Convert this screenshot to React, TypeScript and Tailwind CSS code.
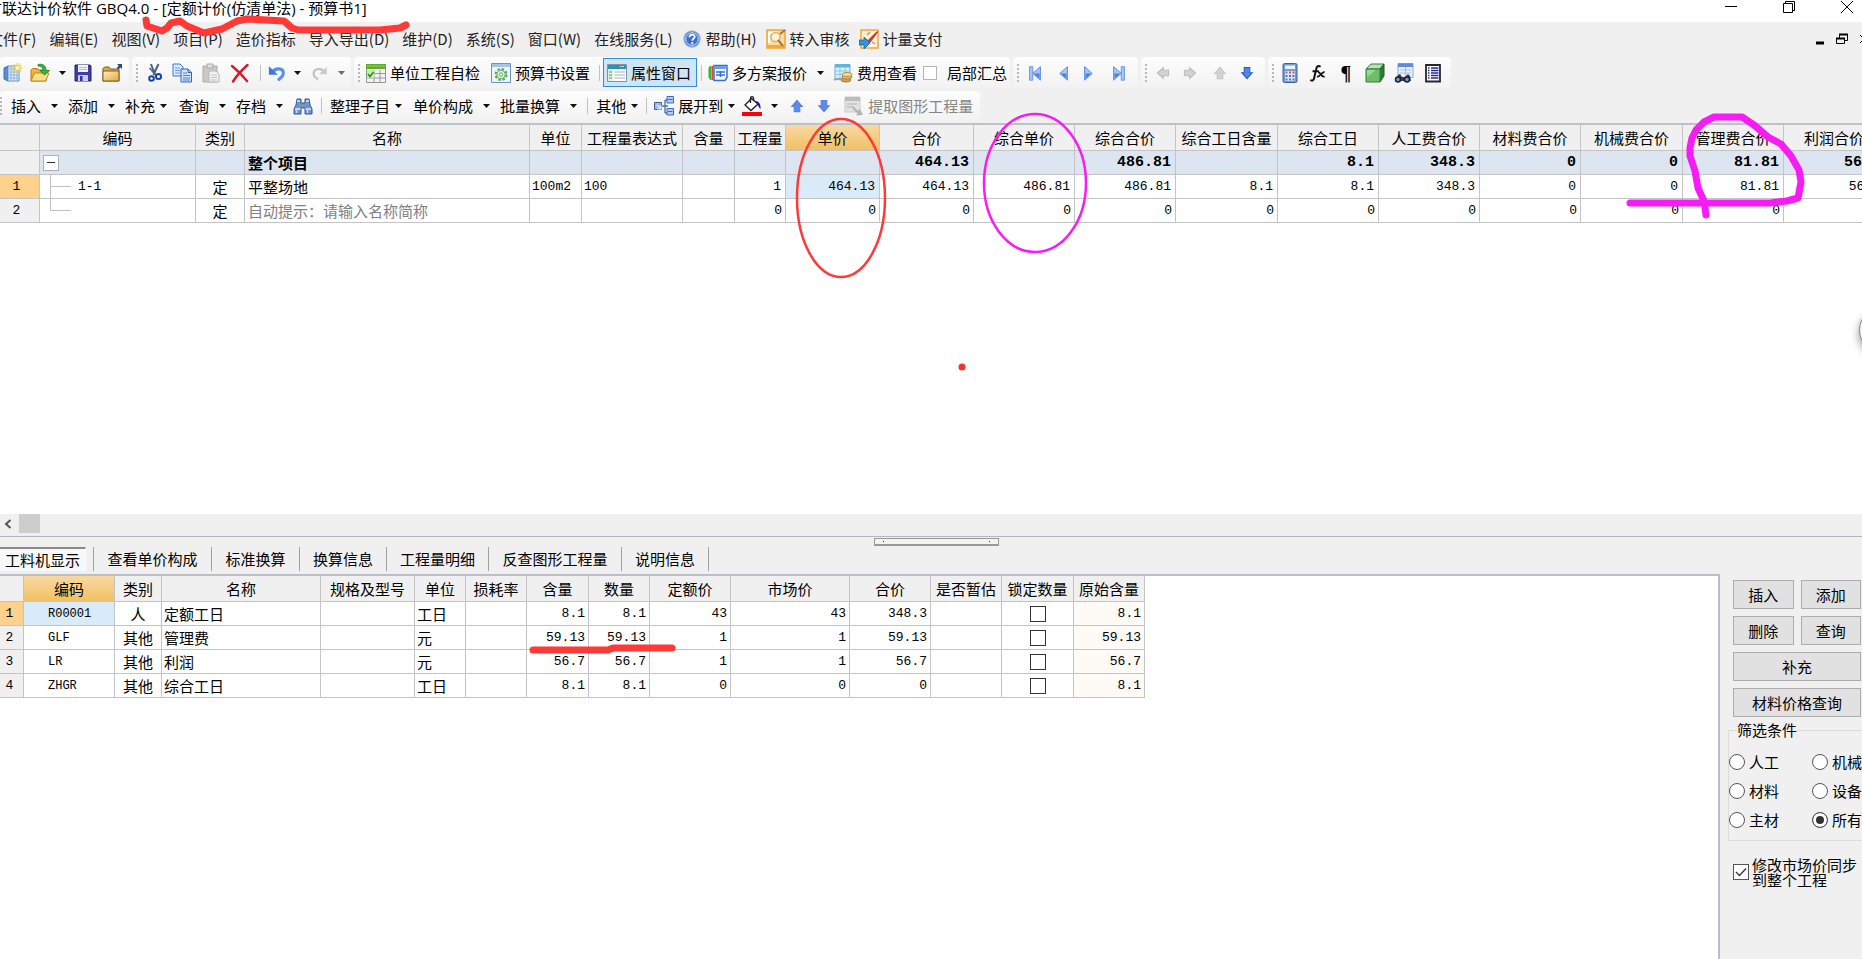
import { useState } from 'react';
import type { ReactNode } from 'react';

const menus = ['文件(F)', '编辑(E)', '视图(V)', '项目(P)', '造价指标', '导入导出(D)', '维护(D)', '系统(S)', '窗口(W)', '在线服务(L)'];

const upperCols = [
  { title: '编码', w: 156 },
  { title: '类别', w: 49 },
  { title: '名称', w: 285 },
  { title: '单位', w: 52 },
  { title: '工程量表达式', w: 101 },
  { title: '含量', w: 52 },
  { title: '工程量', w: 51 },
  { title: '单价', w: 94 },
  { title: '合价', w: 94 },
  { title: '综合单价', w: 101 },
  { title: '综合合价', w: 101 },
  { title: '综合工日含量', w: 102 },
  { title: '综合工日', w: 101 },
  { title: '人工费合价', w: 101 },
  { title: '材料费合价', w: 101 },
  { title: '机械费合价', w: 102 },
  { title: '管理费合价', w: 101 },
  { title: '利润合价', w: 101 },
];

const totals = ['', '', '464.13', '', '486.81', '', '8.1', '348.3', '0', '0', '81.81', '56.7'];
const rowOne = ['1', '464.13', '464.13', '486.81', '486.81', '8.1', '8.1', '348.3', '0', '0', '81.81', '56.7'];
const rowTwo = ['0', '0', '0', '0', '0', '0', '0', '0', '0', '0', '0', ''];

const lowerCols = [
  { title: '编码', w: 91 },
  { title: '类别', w: 47 },
  { title: '名称', w: 159 },
  { title: '规格及型号', w: 94 },
  { title: '单位', w: 51 },
  { title: '损耗率', w: 61 },
  { title: '含量', w: 62 },
  { title: '数量', w: 61 },
  { title: '定额价', w: 81 },
  { title: '市场价', w: 119 },
  { title: '合价', w: 81 },
  { title: '是否暂估', w: 71 },
  { title: '锁定数量', w: 72 },
  { title: '原始含量', w: 71 },
];

const lowerRows = [
  { code: 'R00001', kind: '人', name: '定额工日', unit: '工日', amount: '8.1', price: '43', total: '348.3' },
  { code: 'GLF', kind: '其他', name: '管理费', unit: '元', amount: '59.13', price: '1', total: '59.13' },
  { code: 'LR', kind: '其他', name: '利润', unit: '元', amount: '56.7', price: '1', total: '56.7' },
  { code: 'ZHGR', kind: '其他', name: '综合工日', unit: '工日', amount: '8.1', price: '0', total: '0' },
];

const tabs = [
  { title: '查看单价构成', cls: 'w-[118px]' },
  { title: '标准换算', cls: 'w-[88px]' },
  { title: '换算信息', cls: 'w-[87px]' },
  { title: '工程量明细', cls: 'w-[102px]' },
  { title: '反查图形工程量', cls: 'w-[133px]' },
  { title: '说明信息', cls: 'w-[87px]' },
];

const filters = ['人工', '机械', '材料', '设备', '主材', '所有'];

const cell = 'border-r border-b border-[#c4c4c4] p-0 whitespace-nowrap overflow-hidden';
const num = "font-['Liberation_Mono',monospace] text-[13px]";
const headCell = `${cell} bg-[#f0f0f0] text-center font-normal`;
const activeHead = `${cell} bg-linear-to-b from-[#f8d9a2] to-[#f0c062] text-center font-normal`;

function Svg({ size = 20, children }: { size?: number; children: ReactNode }) {
  return (
    <svg width={size} height={size} viewBox="0 0 20 20" fill="none" className="shrink-0" aria-hidden="true">
      {children}
    </svg>
  );
}

/* ---------- icons ---------- */

const NewIcon = () => (
  <Svg>
    <path d="M2 5l4-2v15l-4-2z" fill="#5d8fd0" stroke="#3b6db0" />
    <path d="M6 3h11v15H6z" fill="#e3eefb" stroke="#5f8dc8" />
    <path d="M7 6h9M7 9h9M7 12h9M7 15h9M9 4v13M12 4v13M15 4v13" stroke="#86aede" strokeWidth=".9" />
    <path d="M15.500 0v10M10.500 5h10M12 1.500l7 7M19 1.500l-7 7" stroke="#f6cf3c" strokeWidth="1.500" />
    <circle cx="15.500" cy="5" r="2" fill="#fff6b0" />
  </Svg>
);

const OpenIcon = () => (
  <Svg>
    <path d="M1 18V7l1.500-1.500h5L9 7h7v11z" fill="#f0b63a" stroke="#b07d16" />
    <path d="M1 18l3.500-8H19l-3.500 8z" fill="#ffdf83" stroke="#b98a22" />
    <path d="M8 1.500c5-1 8 1 8 6h3.500L14.500 12 10 7.500h3c0-3-1.500-4.500-5-4.500z" fill="#3fb241" stroke="#1b7c22" strokeWidth=".8" />
  </Svg>
);

const SaveIcon = () => (
  <Svg>
    <path d="M2 2h15l1 1v15H2z" fill="#3c3fa8" stroke="#23266f" />
    <path d="M5 2h10v7H5z" fill="#f4f5fb" />
    <path d="M6 4.500h8M6 6.500h8" stroke="#b3b7d8" />
    <path d="M5 12h10v6H5z" fill="#c9cdea" />
    <path d="M7 13h2.500v5H7z" fill="#30339a" />
  </Svg>
);

const FolderIcon = () => (
  <Svg>
    <path d="M1 18V5.500L2.500 4H7l1.500 2H17v12z" fill="#d9a948" stroke="#7d5f22" />
    <path d="M1 18V8h16v10z" fill="url(#folderFill)" stroke="#7d5f22" />
    <path d="M20 6V1h-5l1.800 1.800-2 2 1.600 1.600 2-2z" fill="#2f4a78" />
    <defs>
      <linearGradient id="folderFill" x1="0" y1="0" x2="1" y2="1">
        <stop stopColor="#fff0bf" />
        <stop offset="1" stopColor="#e2a836" />
      </linearGradient>
    </defs>
  </Svg>
);

const CutIcon = () => (
  <Svg>
    <path d="M6 1l4 11M13.500 1L10 8.500 8.500 12" stroke="#4c6285" strokeWidth="2" />
    <path d="M4.500 5l7 8" stroke="#4c6285" strokeWidth="1.500" />
    <circle cx="6.500" cy="15.500" r="2.300" stroke="#1646a4" strokeWidth="2" />
    <circle cx="13.500" cy="13.500" r="2.600" stroke="#1646a4" strokeWidth="2" />
  </Svg>
);

const CopyIcon = () => (
  <Svg>
    <path d="M1 1h7l3 3v9H1z" fill="#dcebfc" stroke="#3c74c4" />
    <path d="M3 5h5M3 7.500h5M3 10h5" stroke="#6c9cdc" />
    <path d="M9 6h7l3.500 3.500V19H9z" fill="#cfe3fb" stroke="#2f65b8" />
    <path d="M11 10h4M11 12.500h7M11 15h7M11 17h7" stroke="#4c84d0" />
    <path d="M16 6v3.500h3.500" stroke="#2f65b8" />
  </Svg>
);

const PasteIcon = () => (
  <Svg>
    <path d="M2 3h14v16H2z" fill="#c9c9c9" stroke="#adadad" />
    <path d="M6 1h6v4H6z" fill="#e2e2e2" stroke="#a8a8a8" />
    <path d="M8 8h7l3 3v8H8z" fill="#f1f1f1" stroke="#b5b5b5" />
    <path d="M10 12h6M10 14.500h6M10 17h6" stroke="#c4c4c4" />
  </Svg>
);

const DeleteIcon = () => (
  <Svg>
    <path d="M2 3c5 4 10 9 15 15M17.500 2C12 7 7 12 3 18.500" stroke="#d8182c" strokeWidth="2.400" strokeLinecap="round" />
  </Svg>
);

const UndoIcon = () => (
  <Svg size={18}>
    <path d="M5 9c3-5 12-5 12 1 0 4-3 6-6 8" stroke="#5b90e4" strokeWidth="3.500" />
    <path d="M1 2.500V12h10z" fill="#3f78d8" />
  </Svg>
);

const RedoIcon = () => (
  <Svg size={18}>
    <path d="M14 8C11 4 3 5 3 10.500c0 3.500 3 5.500 5 6.500" stroke="#c4c4c4" strokeWidth="2.600" />
    <path d="M17.500 3v8.500H9z" fill="#c9c9c9" />
  </Svg>
);

const CheckTableIcon = () => (
  <Svg>
    <path d="M.5 1.500h19v18H.5z" fill="#f3f3f3" stroke="#8d9a8d" />
    <path d="M0 1h20v5H0z" fill="#5cae2c" />
    <path d="M1 3h18" stroke="#94d35f" />
    <path d="M1 10.500h18M1 15h18M8 7v12M14 7v12" stroke="#9a9a9a" />
    <path d="M1 7h7v8H1z" fill="#c9ecb0" />
    <path d="M2 11l2 2.500L7.500 9" stroke="#2f9a1c" strokeWidth="1.800" />
  </Svg>
);

const SettingIcon = () => (
  <Svg>
    <path d="M.5.5h19v19H.5z" fill="#edf4fb" stroke="#6f93bd" />
    <path d="M1 1h18v3H1z" fill="#a6c4e6" />
    <circle cx="10" cy="11.500" r="5.500" stroke="#58a858" strokeWidth="2" strokeDasharray="2.600 1.700" />
    <circle cx="10" cy="11.500" r="4.200" fill="#dff2dc" stroke="#58a858" />
    <circle cx="10" cy="11.500" r="1.700" fill="#fff" stroke="#58a858" />
  </Svg>
);

const PropertyIcon = () => (
  <Svg>
    <path d="M.5 1.500h19v17H.5z" fill="#fbfdfe" stroke="#7e95a8" />
    <path d="M1 2h18v4H1z" fill="#2b92bb" />
    <path d="M13 3.500h1.500M15.500 3.500H17" stroke="#fff" />
    <path d="M1 6h5v12H1z" fill="#dff0dc" />
    <path d="M2 9h3M2 12h3M2 15h3" stroke="#56a356" strokeWidth="1.200" />
    <path d="M7.500 9H18M7.500 12H18M7.500 15H18" stroke="#aab4bd" strokeWidth="1.200" />
  </Svg>
);

const PlansIcon = () => (
  <Svg>
    <path d="M3 3L1 4.500v10L3 17z" fill="#3cc23c" stroke="#2fae2f" />
    <path d="M4.500 3v14" stroke="#e8462a" strokeWidth="1.500" />
    <path d="M6 2.500h13v12l-2 3H6z" fill="#f2f7fe" stroke="#3a6fd0" strokeWidth="1.500" />
    <path d="M6 3h13v3H6z" fill="#6c9cee" />
    <path d="M8 9h9M8 12h9M12.500 8v6" stroke="#3a6fd0" strokeWidth="1.500" />
  </Svg>
);

const CostIcon = () => (
  <Svg>
    <path d="M2 1.500h15v14H2z" fill="#d9f0fb" stroke="#67b0d8" />
    <path d="M2 1.500h15v3H2z" fill="#5fb4e0" />
    <path d="M2 8h15M2 11.500h15M7 4v11M12 4v11" stroke="#8cc8e6" />
    <path d="M1 17c3-2 6 0 10-1" stroke="#a2a2a2" strokeWidth="2" />
    <ellipse cx="13" cy="17" rx="5" ry="2" fill="#d0a350" stroke="#a87c34" />
    <ellipse cx="14" cy="14" rx="5" ry="2" fill="#e6c078" stroke="#a87c34" />
    <ellipse cx="14" cy="11.500" rx="5" ry="2" fill="#f6dc98" stroke="#b88c40" />
  </Svg>
);

const NavIcon = ({ flip, bar }: { flip?: boolean; bar?: boolean }) => (
  <Svg size={18}>
    <g transform={flip ? 'matrix(-1 0 0 1 20 0)' : undefined}>
      {bar && <path d="M4 3h3.500v15H4z" fill="#a5c6f8" stroke="#5f90e4" />}
      <path d="M16 3v15l-8.500-7.500z" fill="#a5c6f8" stroke="#4f84e0" />
      <path d="M15 10.500V16l-6.500-5.500z" fill="#4a80e4" />
    </g>
  </Svg>
);

const ArrowIcon = ({ turn, fill, edge, size = 14 }: { turn: number; fill: string; edge: string; size?: number }) => (
  <Svg size={size}>
    <path d="M10 2l7.500 8.500H14V18H6v-7.500H2.500z" fill={fill} stroke={edge} strokeWidth="1.500" transform={`rotate(${turn} 10 10)`} />
  </Svg>
);

const CalcIcon = () => (
  <Svg>
    <rect x="3" y=".5" width="14" height="19" rx="1.500" fill="#6f9bd6" stroke="#3c62a0" />
    <path d="M5 2.500h10v3.500H5z" fill="#e9f3fd" />
    <path d="M5 8h10v10H5z" fill="#dce8f6" />
    <path d="M5.500 9.500h2M9 9.500h2M12.500 9.500h2" stroke="#e05050" strokeWidth="2" />
    <path d="M5.500 13h2M9 13h2M12.500 13h2M5.500 16.500h2M9 16.500h2M12.500 16.500h2" stroke="#4a78c0" strokeWidth="2" />
  </Svg>
);

const FxIcon = () => (
  <Svg size={18}>
    <path d="M14 3c-3-2-4.500 0-5 3L7 15c-.5 3-2 4-4.500 3M5 8h7" stroke="#111" strokeWidth="2.200" />
    <path d="M11 9c3-1 3 6 7.500 5M18.500 9c-3-1-5 6-8.500 5" stroke="#111" strokeWidth="1.900" />
  </Svg>
);

const CubeIcon = () => (
  <Svg>
    <path d="M1 6l5-5h13l-4 5z" fill="#b6e6b0" stroke="#3b7c3b" />
    <path d="M15 6l4-5v12l-4 6z" fill="#2f7a35" stroke="#235e28" />
    <path d="M1 6h14v13H1z" fill="#6cbf68" stroke="#3b7c3b" />
    <path d="M2 7h9L2 14z" fill="#98d892" />
  </Svg>
);

const FindSheetIcon = () => (
  <Svg>
    <path d="M4 .5h15v14H4z" fill="#e8f0fb" stroke="#8fa9d0" />
    <path d="M4 .5h15v3.500H4z" fill="#5c8be0" />
    <path d="M6 7h11M6 10h11M11.500 4v9" stroke="#aabfe0" />
    <path d="M4 12l2-1 2 3h3l3-3 2 2 1 5H1z" fill="#343b48" />
    <circle cx="4" cy="16.500" r="2.500" fill="#6f9fd0" stroke="#1c2430" strokeWidth="1.500" />
    <circle cx="13" cy="16.500" r="2.500" fill="#6f9fd0" stroke="#1c2430" strokeWidth="1.500" />
  </Svg>
);

const ListIcon = () => (
  <Svg>
    <path d="M3 2h14v16.500H3z" fill="#fff" stroke="#26262c" strokeWidth="1.800" />
    <path d="M8 5h7.500M8 7.500h7.500M8 10h7.500M8 12.500h7.500M8 15h7.500M5 5h1.500M5 7.500h1.500M5 10h1.500M5 12.500h1.500M5 15h1.500" stroke="#2a2a90" strokeWidth="1.300" />
  </Svg>
);

const BinocularsIcon = () => (
  <Svg>
    <path d="M4 3h4v4h4V3h4l1 6 2 4v5h-7v-6H8v6H1v-5l2-4z" fill="#6f95cc" stroke="#34588f" />
    <path d="M2 13h5.500M12.500 13H18M4 5h3M13 5h3" stroke="#dfeaf8" strokeWidth="1.500" />
    <path d="M3.500 14v3M14.500 14v3" stroke="#c3d8f2" strokeWidth="1.500" />
  </Svg>
);

const TreeIcon = () => (
  <Svg>
    <path d="M8 10h3M11 4v13M11 4h3M11 17h3M11 10h3" stroke="#4a6fa8" strokeWidth="1.300" />
    <path d="M.5 6.500h7v7h-7z" fill="#9db9e4" stroke="#3d5f9c" />
    <path d="M3 9l4 4M7 9v4H3" stroke="#e8f0fb" strokeWidth="1.200" />
    <path d="M13 .5h6.500V7H13zM13 12.500h6.500V19H13z" fill="#b5cbee" stroke="#3d6cc4" />
    <path d="M14 3.500h4.500M14 15.500h4.500" stroke="#3d6cc4" />
  </Svg>
);

const BucketIcon = () => (
  <Svg>
    <path d="M0 16h20v4H0z" fill="#fb0007" />
    <path d="M3 9l6.500-6.500L16 8l-7 6.500z" fill="#fff" stroke="#1e1e28" strokeWidth="1.300" />
    <path d="M8.500 7V2c0-1.800 3-1.800 3 0v3" stroke="#1e1e28" strokeWidth="1.300" />
    <path d="M13 5c4 0 6 3 5.500 8-1.500-1-2-3-3-5z" fill="#18208c" />
  </Svg>
);

const ExtractIcon = () => (
  <Svg>
    <path d="M1 1h15v15H1z" fill="#e2e2e2" stroke="#cacaca" />
    <path d="M1 1h15v4H1z" fill="#bdbdbd" />
    <path d="M3 8h10M3 11h6" stroke="#c2c2c2" strokeWidth="1.500" />
    <path d="M9 10l5 5 2-2 3 6-7 .5 1.500-2-5-5z" fill="#b4b4b4" />
  </Svg>
);

const HelpIcon = () => (
  <Svg size={18}>
    <circle cx="10" cy="10" r="9" fill="#3d6fd2" stroke="#9bb6e6" strokeWidth="1.500" />
    <circle cx="10" cy="10" r="7" stroke="#e6effc" />
    <path d="M7.200 8c0-4 5.800-3.600 5.800-.5 0 2-2.700 2-2.700 4.500" stroke="#fff" strokeWidth="1.900" />
    <circle cx="10.300" cy="14.500" r="1.200" fill="#fff" />
  </Svg>
);

const AuditIcon = () => (
  <Svg>
    <path d="M1 1h18v18H1z" fill="#fbdc9c" stroke="#eda537" strokeWidth="1.500" />
    <path d="M3 14V4l8-1" stroke="#fff" strokeWidth="2" />
    <path d="M1 16h18v3H1z" fill="#f3a93a" />
    <circle cx="9.500" cy="8" r="4.500" fill="#fdf3da" stroke="#d9b47c" strokeWidth="1.500" />
    <path d="M12 11l5 6M19 1l-5 4" stroke="#a07a44" strokeWidth="2" />
  </Svg>
);

const PayIcon = () => (
  <Svg>
    <path d="M2 1h17v18H2z" fill="#fdf0d4" stroke="#f2a536" strokeWidth="1.500" />
    <path d="M6 9l3 2 8-8 3-1-9 12-2 1-4-4z" fill="#b4423c" />
    <path d="M8 6l3-3M13 13l3 2" stroke="#d08a86" strokeWidth="1.500" />
    <path d="M0 11h5V8l6 6-6 6v-4H0z" fill="#2f94dc" stroke="#14649f" strokeWidth=".8" />
  </Svg>
);

/* ---------- toolbar pieces ---------- */

const Caret = ({ cls, color = '#111' }: { cls: string; color?: string }) => (
  <span className={`${cls} flex justify-center shrink-0`}>
    <svg width="7" height="4" viewBox="0 0 7 4" aria-hidden="true">
      <path d="M0 0h7L3.500 4z" fill={color} />
    </svg>
  </span>
);

const Grip = () => (
  <span className="w-2.5 shrink-0 flex justify-center">
    <span className="h-[18px] border-l-2 border-dotted border-[#b8b8b8]"></span>
  </span>
);

const Sep = ({ cls }: { cls: string }) => <span className={`${cls} w-px h-4 shrink-0 bg-[#c2c2c2]`}></span>;

const IconBtn = ({ label, cls, children }: { label: string; cls: string; children: ReactNode }) => (
  <button type="button" aria-label={label} className={`${cls} h-7 shrink-0 flex items-center justify-center`}>
    {children}
  </button>
);

const TextBtn = ({ label, icon, cls = '' }: { label: string; icon: ReactNode; cls?: string }) => (
  <button type="button" className={`${cls} px-0.5 shrink-0 flex items-center gap-1 whitespace-nowrap`}>
    {icon}
    {label}
  </button>
);

const DropBtn = ({ label, tight }: { label: string; tight?: boolean }) => (
  <button type="button" className="shrink-0 flex items-center whitespace-nowrap">
    {label}
    <Caret cls={tight ? 'w-4' : 'w-[27px]'} />
  </button>
);

const group = 'flex items-center shrink-0 rounded-sm bg-linear-to-b from-[#fdfdfd] to-[#f2f2f2]';

function Toolbars() {
  return (
    <div className="leading-5 overflow-hidden">
      <div className="flex gap-[3px] h-[31px]">
        <div className={`${group} w-[129px]`}>
          <IconBtn label="新建" cls="w-6"><NewIcon /></IconBtn>
          <IconBtn label="打开" cls="w-8"><OpenIcon /></IconBtn>
          <Caret cls="w-3" />
          <IconBtn label="保存" cls="w-[30px]"><SaveIcon /></IconBtn>
          <IconBtn label="关闭工程" cls="w-7"><FolderIcon /></IconBtn>
        </div>
        <div className={`${group} w-[219px]`}>
          <Grip />
          <IconBtn label="剪切" cls="w-[26px]"><CutIcon /></IconBtn>
          <IconBtn label="复制" cls="w-7"><CopyIcon /></IconBtn>
          <IconBtn label="粘贴" cls="w-[30px]"><PasteIcon /></IconBtn>
          <IconBtn label="删除" cls="w-7"><DeleteIcon /></IconBtn>
          <Sep cls="mx-1.5" />
          <IconBtn label="撤销" cls="w-5"><UndoIcon /></IconBtn>
          <Caret cls="w-5" />
          <IconBtn label="恢复" cls="w-[26px]"><RedoIcon /></IconBtn>
          <Caret cls="w-4" color="#6b6b6b" />
        </div>
        <div className={`${group} w-[656px]`}>
          <Grip />
          <TextBtn label="单位工程自检" icon={<CheckTableIcon />} />
          <TextBtn label="预算书设置" icon={<SettingIcon />} cls="ml-[7px]" />
          <Sep cls="ml-[7px]" />
          <button type="button" className="ml-[3px] w-[94px] h-[29px] pl-[3px] shrink-0 flex items-center gap-1 whitespace-nowrap border border-[#2f8fdd] bg-[#cfe4f6]">
            <PropertyIcon />
            属性窗口
          </button>
          <Sep cls="mx-1" />
          <TextBtn label="多方案报价" icon={<PlansIcon />} />
          <Caret cls="w-[22px]" />
          <TextBtn label="费用查看" icon={<CostIcon />} />
          <label className="ml-1 flex items-center gap-2.5 whitespace-nowrap shrink-0">
            <input type="checkbox" className="appearance-none size-3.5 border border-[#b4b4b4] bg-white" />
            局部汇总
          </label>
        </div>
        <div className={`${group} w-[125px]`}>
          <Grip />
          <IconBtn label="第一条" cls="w-6"><NavIcon bar /></IconBtn>
          <IconBtn label="上一条" cls="w-[29px]"><NavIcon /></IconBtn>
          <IconBtn label="下一条" cls="w-7"><NavIcon flip /></IconBtn>
          <IconBtn label="最后一条" cls="w-[30px]"><NavIcon flip bar /></IconBtn>
        </div>
        <div className={`${group} w-[124px]`}>
          <Grip />
          <IconBtn label="左移" cls="w-6"><ArrowIcon turn={-90} fill="#d2d2d2" edge="#bcbcbc" /></IconBtn>
          <IconBtn label="右移" cls="w-[30px]"><ArrowIcon turn={90} fill="#d2d2d2" edge="#bcbcbc" /></IconBtn>
          <IconBtn label="上移" cls="w-[30px]"><ArrowIcon turn={0} fill="#d2d2d2" edge="#c6c6c6" /></IconBtn>
          <IconBtn label="下移" cls="w-6"><ArrowIcon turn={180} fill="#4f86ea" edge="#2a5cc4" /></IconBtn>
        </div>
        <div className={`${group} w-[183px]`}>
          <Grip />
          <IconBtn label="计算器" cls="w-6"><CalcIcon /></IconBtn>
          <IconBtn label="函数" cls="w-[30px]"><FxIcon /></IconBtn>
          <IconBtn label="特殊符号" cls="w-7"><span className="font-['Liberation_Serif',serif] font-bold text-[20px]">¶</span></IconBtn>
          <IconBtn label="图元" cls="w-[29px]"><CubeIcon /></IconBtn>
          <IconBtn label="查找" cls="w-[30px]"><FindSheetIcon /></IconBtn>
          <IconBtn label="列表" cls="w-[27px]"><ListIcon /></IconBtn>
        </div>
      </div>
      <div className="flex pt-[3px]">
        <div className={`${group} h-[30px] pr-[7px]`}>
          <span className="h-[18px] w-[11px] shrink-0 border-l-2 border-dotted border-[#b8b8b8]"></span>
          <DropBtn label="插入" />
          <DropBtn label="添加" />
          <DropBtn label="补充" tight />
          <span className="w-2"></span>
          <DropBtn label="查询" />
          <DropBtn label="存档" />
          <IconBtn label="查找" cls="w-5"><BinocularsIcon /></IconBtn>
          <Sep cls="mx-2" />
          <DropBtn label="整理子目" tight />
          <span className="w-[7px]"></span>
          <DropBtn label="单价构成" />
          <DropBtn label="批量换算" />
          <Sep cls="mr-2" />
          <DropBtn label="其他" tight />
          <Sep cls="ml-1 mr-[7px]" />
          <button type="button" className="flex items-center gap-1 whitespace-nowrap">
            <TreeIcon />
            展开到
            <Caret cls="w-2" />
          </button>
          <IconBtn label="填充色" cls="ml-[7px] w-5"><BucketIcon /></IconBtn>
          <Caret cls="w-6" />
          <IconBtn label="上移一行" cls="w-[22px]"><ArrowIcon turn={0} fill="#5b8cec" edge="#5a82d4" /></IconBtn>
          <IconBtn label="下移一行" cls="w-8"><ArrowIcon turn={180} fill="#5b8cec" edge="#5a82d4" /></IconBtn>
          <button type="button" disabled className="ml-1 flex items-center gap-1 whitespace-nowrap text-[#858585]">
            <ExtractIcon />
            提取图形工程量
          </button>
        </div>
      </div>
    </div>
  );
}

/* ---------- grids ---------- */

function TreeLine({ last }: { last?: boolean }) {
  return (
    <svg width="38" height="24" viewBox="0 0 38 24" className="shrink-0" aria-hidden="true">
      <path d={last ? 'M10.500 0v11.500H31' : 'M10.500 0v24M10.500 11.500H31'} stroke="#c0c0c0" fill="none" />
    </svg>
  );
}

function UpperGrid() {
  return (
    <div className="h-[389px] shrink-0 overflow-hidden bg-white">
      <table className="table-fixed border-separate border-spacing-0 w-[1885px] leading-5">
        <colgroup>
          <col style={{ width: 40 }} />
          {upperCols.map((c) => <col key={c.title} style={{ width: c.w }} />)}
        </colgroup>
        <thead>
          <tr className="h-[26px]">
            <th className={headCell}></th>
            {upperCols.map((c) => (
              <th key={c.title} className={c.title === '单价' ? activeHead : headCell}>{c.title}</th>
            ))}
          </tr>
        </thead>
        <tbody>
          <tr className="h-6 bg-[#dde6f0]">
            <td className={headCell}></td>
            <td className={cell}>
              <button type="button" aria-label="折叠" className="ml-[3px] size-4 flex items-center justify-center bg-white border border-[#b0b0b0]">
                <span className="w-2 h-px bg-[#333]"></span>
              </button>
            </td>
            <td className={cell}></td>
            <td className={`${cell} pl-[3px] font-bold`}>整个项目</td>
            <td className={cell}></td>
            <td className={cell}></td>
            <td className={cell}></td>
            {totals.map((v, i) => (
              <td key={i} className={`${cell} pr-1 text-right font-['Liberation_Mono',monospace] font-bold`}>{v}</td>
            ))}
          </tr>
          <tr className="h-6">
            <td className={`${cell} ${num} bg-[#fed18c] text-center pr-1.5`}>1</td>
            <td className={cell}>
              <div className={`flex items-center h-[23px] ${num}`}><TreeLine />1-1</div>
            </td>
            <td className={`${cell} text-center`}>定</td>
            <td className={`${cell} pl-[3px]`}>平整场地</td>
            <td className={`${cell} ${num} pl-0.5`}>100m2</td>
            <td className={`${cell} ${num} pl-0.5`}>100</td>
            <td className={cell}></td>
            {rowOne.map((v, i) => (
              <td key={i} className={`${cell} ${num} pr-1 text-right ${i === 1 ? 'bg-[#d9eaf8]' : ''}`}>{v}</td>
            ))}
          </tr>
          <tr className="h-6">
            <td className={`${cell} ${num} bg-[#f0f0f0] text-center pr-1.5`}>2</td>
            <td className={cell}>
              <div className="flex items-center h-[23px]"><TreeLine last /></div>
            </td>
            <td className={`${cell} text-center`}>定</td>
            <td className={`${cell} pl-[3px] text-[#808080]`}>自动提示：请输入名称简称</td>
            <td className={cell}></td>
            <td className={cell}></td>
            <td className={cell}></td>
            {rowTwo.map((v, i) => (
              <td key={i} className={`${cell} ${num} pr-[3px] text-right`}>{v}</td>
            ))}
          </tr>
        </tbody>
      </table>
    </div>
  );
}

function LowerGrid() {
  return (
    <table className="table-fixed border-separate border-spacing-0 w-[1145px] leading-5">
      <colgroup>
        <col style={{ width: 24 }} />
        {lowerCols.map((c) => <col key={c.title} style={{ width: c.w }} />)}
      </colgroup>
      <thead>
        <tr className="h-[26px]">
          <th className={headCell}></th>
          {lowerCols.map((c, i) => (
            <th key={c.title} className={i === 0 ? activeHead : headCell}>{c.title}</th>
          ))}
        </tr>
      </thead>
      <tbody>
        {lowerRows.map((r, i) => (
          <tr key={r.code} className="h-6">
            <td className={`${cell} ${num} text-center pr-1 ${i === 0 ? 'bg-[#fed18c]' : 'bg-[#f0f0f0]'}`}>{i + 1}</td>
            <td className={`${cell} pl-6 font-['Liberation_Mono',monospace] text-[12px] ${i === 0 ? 'bg-[#d9eaf8]' : ''}`}>{r.code}</td>
            <td className={`${cell} text-center`}>{r.kind}</td>
            <td className={`${cell} pl-0.5`}>{r.name}</td>
            <td className={cell}></td>
            <td className={`${cell} pl-0.5`}>{r.unit}</td>
            <td className={cell}></td>
            <td className={`${cell} ${num} pr-[3px] text-right`}>{r.amount}</td>
            <td className={`${cell} ${num} pr-[3px] text-right`}>{r.amount}</td>
            <td className={`${cell} ${num} pr-[3px] text-right`}>{r.price}</td>
            <td className={`${cell} ${num} pr-[3px] text-right`}>{r.price}</td>
            <td className={`${cell} ${num} pr-[3px] text-right`}>{r.total}</td>
            <td className={cell}></td>
            <td className={cell}>
              <input type="checkbox" aria-label={`锁定数量 ${r.name}`} className="appearance-none block mx-auto size-4 border border-[#333] bg-white" />
            </td>
            <td className={`${cell} ${num} pr-[3px] text-right bg-[#fefaf5]`}>{r.amount}</td>
          </tr>
        ))}
      </tbody>
    </table>
  );
}

function SidePanel() {
  const [filter, setFilter] = useState('所有');
  const btn = 'h-[29px] border border-[#adadad] bg-[#e1e1e1] text-center leading-5';

  return (
    <aside className="w-[142px] shrink-0 pt-[33px] overflow-hidden">
      <div className="ml-[13px] grid grid-cols-2 gap-[7px] w-32">
        <button type="button" className={btn}>插入</button>
        <button type="button" className={btn}>添加</button>
        <button type="button" className={btn}>删除</button>
        <button type="button" className={btn}>查询</button>
        <button type="button" className={`${btn} col-span-2`}>补充</button>
        <button type="button" className={`${btn} col-span-2`}>材料价格查询</button>
      </div>
      <fieldset className="ml-2 mt-[3px] w-40 h-[121px] border border-[#dcdcdc]">
        <legend className="ml-2 leading-5">筛选条件</legend>
        <div className="grid grid-cols-[83px_60px] gap-y-[9px] pt-3">
          {filters.map((f) => (
            <label key={f} className="flex items-center gap-1 leading-5 whitespace-nowrap">
              <input
                type="radio"
                name="filter"
                checked={filter === f}
                onChange={() => setFilter(f)}
                className="appearance-none size-4 shrink-0 rounded-full border border-[#555] bg-white checked:bg-[#333] checked:shadow-[inset_0_0_0_3px_#fff]"
              />
              {f}
            </label>
          ))}
        </div>
      </fieldset>
      <label className="ml-[13px] mt-4 flex items-center gap-[3px] whitespace-nowrap leading-[15px]">
        <span className="grid size-4 shrink-0">
          <input type="checkbox" defaultChecked className="peer appearance-none col-start-1 row-start-1 size-4 border border-[#555] bg-white" />
          <svg viewBox="0 0 16 16" className="col-start-1 row-start-1 size-4 pointer-events-none invisible peer-checked:visible" aria-hidden="true">
            <path d="M3 8l3.500 3.500L13 4.500" stroke="#333" strokeWidth="1.300" fill="none" />
          </svg>
        </span>
        <span>修改市场价同步<br />到整个工程</span>
      </label>
    </aside>
  );
}

/* hand-drawn marks lying over the window */
function Marks() {
  return (
    <svg className="absolute inset-0 size-full pointer-events-none" fill="none" strokeLinecap="round" strokeLinejoin="round" aria-hidden="true">
      <g stroke="#fd3a38">
        <path d="M146 20l1 6 15 5 5-3 4-5 9-2 7 5 17 7 18-4 15-8 10-2 37 2 8 7 6 2h82l20-2 6-3" strokeWidth="7" />
        <path d="M533 650h75l5-2h59" strokeWidth="7" />
        <ellipse cx="841" cy="198" rx="44" ry="79" strokeWidth="2.500" />
      </g>
      <circle cx="962" cy="367" r="3.500" fill="#f4302e" />
      <g stroke="#f61cf4">
        <ellipse cx="1035" cy="183" rx="51" ry="69" strokeWidth="2.500" />
        <path d="M1630 203h140l17-2 11-3 3-16-2-12-8-14-10-12-13-7-14-12-12-8h-28l-10 5-8 8-4 8-2 10 0 8 5 15 3 17 6 13 2 14" strokeWidth="7" />
      </g>
    </svg>
  );
}

export default function App() {
  return (
    <div className="relative h-screen flex flex-col overflow-hidden bg-[#f0f0f0] text-black text-[15px] font-['Noto_Sans_CJK_SC',sans-serif]">
      <header className="h-[22px] shrink-0 flex items-start justify-between bg-white overflow-hidden">
        <h1 className="-ml-[13px] leading-4 whitespace-nowrap font-['Open_Sans','Noto_Sans_CJK_SC',sans-serif]">广联达计价软件 GBQ4.0 - [定额计价(仿清单法) - 预算书1]</h1>
        <div className="flex gap-[46px] pr-[9px]">
          <button type="button" aria-label="最小化">
            <svg width="12" height="14" viewBox="0 0 12 14"><path d="M0 6.500h12" stroke="#000" /></svg>
          </button>
          <button type="button" aria-label="还原">
            <svg width="12" height="14" viewBox="0 0 12 14" fill="none" stroke="#000"><path d="M.5 3.500h9v9h-9zM2.500 3V1.500h9v9H10" /></svg>
          </button>
          <button type="button" aria-label="关闭">
            <svg width="12" height="14" viewBox="0 0 12 14"><path d="M0 1l12 12M12 1L0 13" stroke="#000" /></svg>
          </button>
        </div>
      </header>

      <nav className="h-[34px] mb-px shrink-0 flex items-center justify-between leading-5 overflow-hidden">
        <div className="-ml-[12px] flex items-center gap-[13px] whitespace-nowrap text-[#222]">
          {menus.map((m) => <button key={m} type="button">{m}</button>)}
          <button type="button" className="-ml-0.5 flex items-center gap-1"><HelpIcon />帮助(H)</button>
          <button type="button" className="-ml-1 flex items-center gap-1"><AuditIcon />转入审核</button>
          <button type="button" className="-ml-1 flex items-center gap-1"><PayIcon />计量支付</button>
        </div>
        <div className="flex items-center gap-3">
          <button type="button" aria-label="最小化子窗口">
            <svg width="8" height="12" viewBox="0 0 8 12"><path d="M0 10h8" stroke="#000" strokeWidth="3" /></svg>
          </button>
          <button type="button" aria-label="还原子窗口">
            <svg width="12" height="12" viewBox="0 0 12 12" fill="none" stroke="#000"><path d="M.5 5.500h8v5h-8zM3.500 5V1.500h8v6H9" /><path d="M0 5.500h9M3 1.500h9" strokeWidth="2" /></svg>
          </button>
          <button type="button" aria-label="关闭子窗口">
            <svg width="2" height="12" viewBox="0 0 2 12"><path d="M0 2l2 2M0 10l2-2" stroke="#000" /></svg>
          </button>
        </div>
      </nav>

      <Toolbars />

      <main className="mt-0.5 flex-1 min-h-0 flex flex-col border-t-2 border-[#bfc1c8]">
        <UpperGrid />
        <div className="h-[22px] shrink-0 flex items-start">
          <button type="button" aria-label="向左滚动" className="w-[19px] h-[19px] pr-1 flex items-center justify-center">
            <svg width="8" height="10" viewBox="0 0 8 10" fill="none"><path d="M6.500 1L2 5l4.500 4" stroke="#555" strokeWidth="2" /></svg>
          </button>
          <span className="w-[21px] h-[19px] bg-[#cdcdcd]"></span>
        </div>
        <div className="h-[11px] shrink-0 flex justify-center pl-[11px] pt-px border-t border-[#b6b6c0]">
          <div className="w-[125px] h-2 flex items-center justify-between px-2 border border-b-2 border-[#999] bg-[#f3f3f3]">
            <span className="size-px bg-[#1a1a90]"></span>
            <span className="size-px bg-[#1a1a90]"></span>
          </div>
        </div>

        <div className="flex-1 min-h-0 flex">
          <section className="flex-1 min-w-0 flex flex-col">
            <div className="h-[27px] shrink-0 flex items-start leading-5 whitespace-nowrap" role="tablist">
              <button type="button" role="tab" aria-selected="true" className="w-[86px] h-6 text-center bg-[#f8f8f8] border-t-2 border-r border-t-[#8a8a8a] border-r-white">工料机显示</button>
              <span className="ml-[7px] w-px h-6 bg-[#a0a0a0]"></span>
              {tabs.map((t) => (
                <button key={t.title} type="button" role="tab" aria-selected="false" className={`${t.cls} h-6 text-center border-r border-[#a0a0a0]`}>{t.title}</button>
              ))}
            </div>
            <div className="flex-1 min-h-0 overflow-hidden bg-white border-t-2 border-r-2 border-[#bcbdc6]">
              <LowerGrid />
            </div>
          </section>
          <SidePanel />
        </div>
      </main>

      {/* floating assistant ball, mostly off the right edge */}
      <div className="absolute top-[306px] -right-[45px] size-12 rounded-full border border-[#8c8c8c] bg-[#f4f4f4] shadow-[0_4px_8px_#0006]"></div>
      <Marks />
    </div>
  );
}
